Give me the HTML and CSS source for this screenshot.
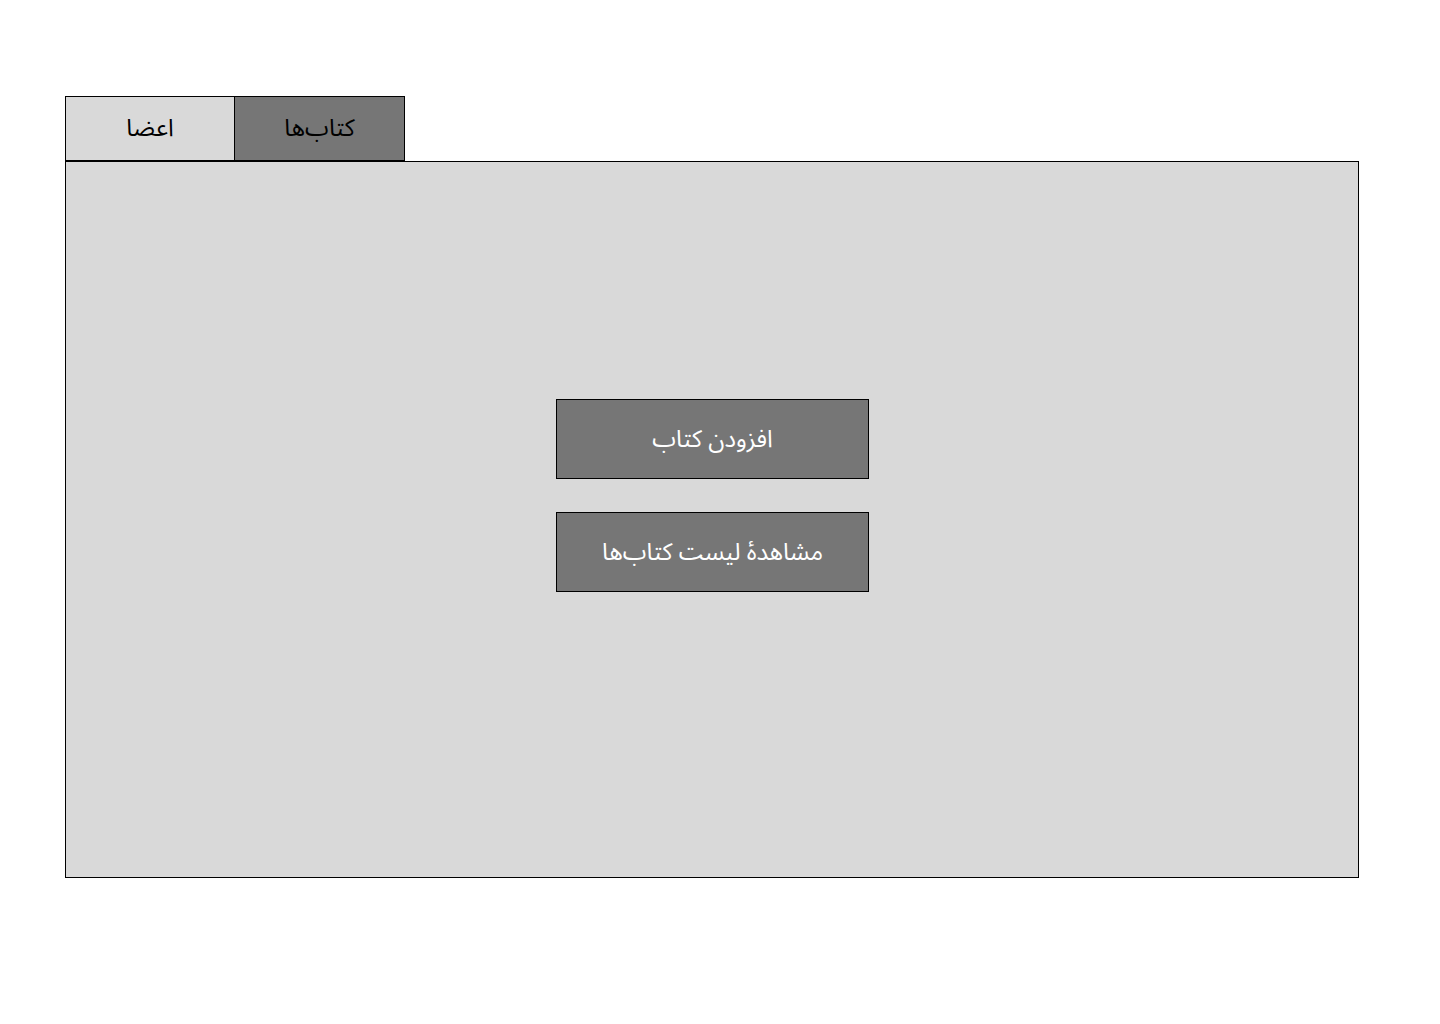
FILE: index.html
```html
<!DOCTYPE html>
<html lang="fa">
<head>
<meta charset="utf-8">
<title>کتابخانه</title>
<link rel="stylesheet" href="styles.css">
</head>
<body>
<div class="page">
  <div class="tabs">
    <div class="tab tab-light">اعضا</div>
    <div class="tab tab-dark">کتاب‌ها</div>
  </div>
  <div class="panel">
    <div class="actions">
      <button class="btn">افزودن کتاب</button>
      <button class="btn">مشاهدهٔ لیست کتاب‌ها</button>
    </div>
  </div>
</div>
</body>
</html>
```
FILE: styles.css
```css
html, body {
  margin: 0;
  padding: 0;
  background: #ffffff;
}
body {
  font-family: "Noto Sans", "Noto Sans Arabic", "DejaVu Sans", sans-serif;
}
.page {
  padding: 96px 0 0 65px;
  width: 1294px;
}
.tabs {
  display: flex;
}
.tab {
  box-sizing: border-box;
  width: 170px;
  height: 65px;
  border: 1px solid #000;
  display: flex;
  align-items: center;
  justify-content: center;
  font-size: 24px;
  color: #000;
  direction: rtl;
  padding-bottom: 1px;
}
.tab-light {
  background: #d9d9d9;
}
.tab-dark {
  background: #767676;
  width: 171px;
  margin-left: -1px;
}
.panel {
  box-sizing: border-box;
  width: 1294px;
  height: 717px;
  border: 1px solid #000;
  background: #d9d9d9;
  display: flex;
  justify-content: center;
  padding-top: 237px;
}
.actions {
  display: flex;
  flex-direction: column;
  gap: 33px;
  margin-left: 1px;
}
.btn {
  box-sizing: border-box;
  width: 313px;
  height: 80px;
  border: 1px solid #000;
  background: #767676;
  color: #ffffff;
  font-family: inherit;
  font-size: 24px;
  direction: rtl;
  padding: 0;
  margin: 0;
}
```
